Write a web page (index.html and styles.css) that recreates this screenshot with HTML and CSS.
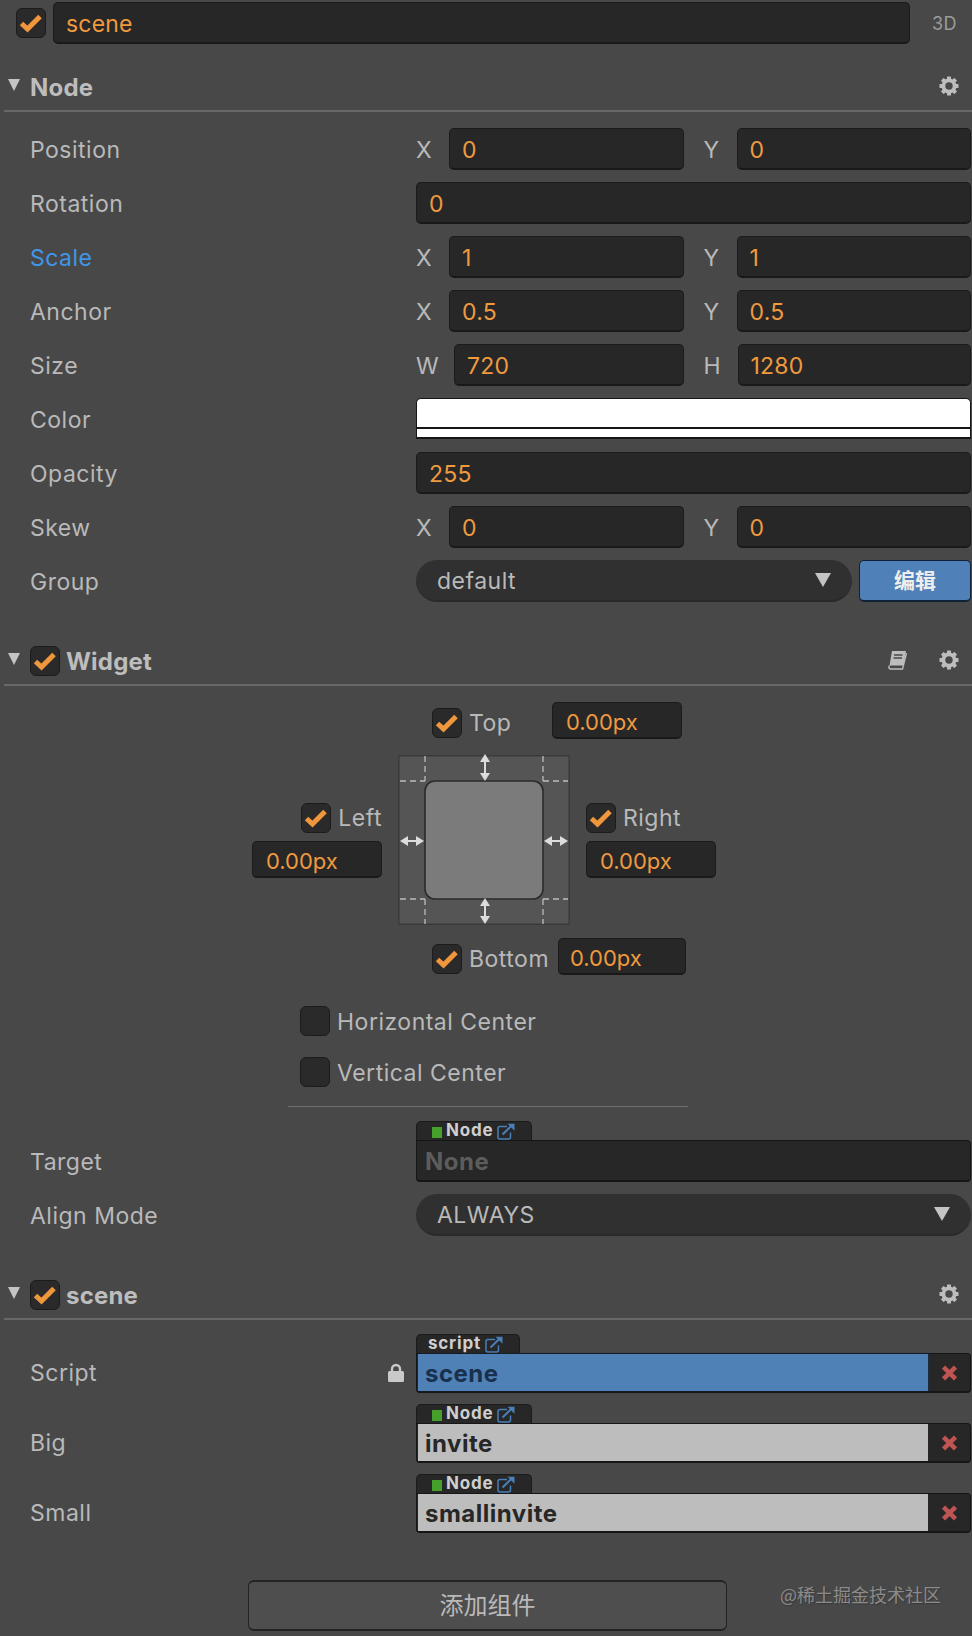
FILE: index.html
```html
<!DOCTYPE html>
<html lang="en">
<head>
  <meta charset="UTF-8">
  <meta name="viewport" content="width=device-width, initial-scale=1.0">
  <title>Inspector</title>
  <link rel="stylesheet" href="styles.css">
</head>
<body>
  <!-- shared icons -->
  <svg class="icon-defs">
    <symbol id="i-check" viewBox="0 0 30 30">
      <path d="M5.5 15.5 L11.5 21 L24 8.5" fill="none" stroke="#f0973d" stroke-width="5"/>
    </symbol>
    <symbol id="i-gear" viewBox="0 0 20 20">
      <circle cx="10" cy="10" r="5.6" fill="none" stroke="#bdbdbd" stroke-width="3.8"/>
      <g fill="#bdbdbd">
        <rect x="8" y="0.5" width="4" height="4" rx="0.6"/>
        <rect x="8" y="15.5" width="4" height="4" rx="0.6"/>
        <rect x="0.5" y="8" width="4" height="4" rx="0.6"/>
        <rect x="15.5" y="8" width="4" height="4" rx="0.6"/>
        <rect x="8" y="0.5" width="4" height="4" rx="0.6" transform="rotate(45 10 10)"/>
        <rect x="8" y="15.5" width="4" height="4" rx="0.6" transform="rotate(45 10 10)"/>
        <rect x="0.5" y="8" width="4" height="4" rx="0.6" transform="rotate(45 10 10)"/>
        <rect x="15.5" y="8" width="4" height="4" rx="0.6" transform="rotate(45 10 10)"/>
      </g>
    </symbol>
    <symbol id="i-link" viewBox="0 0 18 17">
      <path d="M10 3.5 H3 Q1 3.5 1 5.5 V14 Q1 16 3 16 H11.5 Q13.5 16 13.5 14 V9.5" fill="none" stroke="#4a7fb8" stroke-width="1.5"/>
      <path d="M5.5 11.5 L14.5 2.8" fill="none" stroke="#4a7fb8" stroke-width="2"/>
      <path d="M10.5 0.8 H17.5 V7.8 Z" fill="#4a7fb8"/>
    </symbol>
    <symbol id="i-close" viewBox="0 0 17 16">
      <path d="M2.5 2.2 L14.5 13.8 M14.5 2.2 L2.5 13.8" fill="none" stroke="#bf5553" stroke-width="4.6"/>
    </symbol>
  </svg>

  <div class="top-bar">
    <span class="check-box"><svg class="check-mark"><use href="#i-check"/></svg></span>
    <div class="input name-input">scene</div>
    <span class="mode-3d">3D</span>
  </div>

  <!-- Node -->
  <div class="section-head section-first">
    <span class="fold"></span>
    <span class="section-title">Node</span>
    <svg class="gear"><use href="#i-gear"/></svg>
  </div>
  <div class="prop">
    <label>Position</label>
    <div class="pair">
      <div class="axis"><span>X</span><div class="input">0</div></div>
      <div class="axis"><span>Y</span><div class="input">0</div></div>
    </div>
  </div>
  <div class="prop">
    <label>Rotation</label>
    <div class="input wide">0</div>
  </div>
  <div class="prop">
    <label class="changed">Scale</label>
    <div class="pair">
      <div class="axis"><span>X</span><div class="input">1</div></div>
      <div class="axis"><span>Y</span><div class="input">1</div></div>
    </div>
  </div>
  <div class="prop">
    <label>Anchor</label>
    <div class="pair">
      <div class="axis"><span>X</span><div class="input">0.5</div></div>
      <div class="axis"><span>Y</span><div class="input">0.5</div></div>
    </div>
  </div>
  <div class="prop">
    <label>Size</label>
    <div class="pair">
      <div class="axis axis-w"><span>W</span><div class="input">720</div></div>
      <div class="axis axis-h"><span>H</span><div class="input">1280</div></div>
    </div>
  </div>
  <div class="prop">
    <label>Color</label>
    <div class="swatch"><div class="swatch-alpha"></div></div>
  </div>
  <div class="prop">
    <label>Opacity</label>
    <div class="input wide">255</div>
  </div>
  <div class="prop">
    <label>Skew</label>
    <div class="pair">
      <div class="axis"><span>X</span><div class="input">0</div></div>
      <div class="axis"><span>Y</span><div class="input">0</div></div>
    </div>
  </div>
  <div class="prop">
    <label>Group</label>
    <div class="select">default<span class="select-arrow"></span></div>
    <button class="edit-btn">编辑</button>
  </div>

  <!-- Widget -->
  <div class="section-head">
    <span class="fold"></span>
    <span class="check-box"><svg class="check-mark"><use href="#i-check"/></svg></span>
    <span class="section-title">Widget</span>
    <svg class="book" viewBox="0 0 20 20">
      <path d="M5 1 H19 L16.5 15.5 H2.5 Z" fill="#bdbdbd"/>
      <path d="M2.4 15.6 Q1 19 4 19 H15.5 L19.5 3" fill="none" stroke="#bdbdbd" stroke-width="1.4"/>
      <path d="M7 5 H15.5 M6.5 8 H15" stroke="#484848" stroke-width="1.4"/>
    </svg>
    <svg class="gear"><use href="#i-gear"/></svg>
  </div>

  <div class="align-row align-top">
    <div class="check check-top">
      <span class="check-box"><svg class="check-mark"><use href="#i-check"/></svg></span>
      <span>Top</span>
    </div>
    <div class="input small">0.00px</div>
  </div>

  <div class="align-mid">
    <div class="side side-left">
      <div class="check">
        <span class="check-box"><svg class="check-mark"><use href="#i-check"/></svg></span>
        <span>Left</span>
      </div>
      <div class="input small">0.00px</div>
    </div>

    <svg class="align-box" viewBox="0 0 172 170">
      <rect x="0.75" y="0.75" width="170.5" height="168.5" fill="#555" stroke="#3b3b3b" stroke-width="1.5"/>
      <g stroke="#bcbcbc" stroke-width="1.3" stroke-dasharray="6 4">
        <path d="M27 1 V26 M2 26 H27"/>
        <path d="M145 1 V26 M145 26 H170"/>
        <path d="M27 144 V169 M2 144 H27"/>
        <path d="M145 144 V169 M145 144 H170"/>
      </g>
      <rect x="27" y="26" width="118" height="118" rx="10" fill="#7b7b7b" stroke="#2b2b2b" stroke-width="1.6"/>
      <g fill="#dcdcdc">
        <path d="M87 -1 L92 7 H82 Z M87 26 L92 18 H82 Z"/>
        <path d="M87 143 L92 151 H82 Z M87 169 L92 161 H82 Z"/>
        <path d="M2 86 L10 81 V91 Z M26 86 L18 81 V91 Z"/>
        <path d="M146 86 L154 81 V91 Z M170 86 L162 81 V91 Z"/>
      </g>
      <g stroke="#dcdcdc" stroke-width="2">
        <path d="M87 6 V19 M87 150 V162 M9 86 H19 M153 86 H163"/>
      </g>
    </svg>

    <div class="side">
      <div class="check">
        <span class="check-box"><svg class="check-mark"><use href="#i-check"/></svg></span>
        <span>Right</span>
      </div>
      <div class="input small">0.00px</div>
    </div>
  </div>

  <div class="align-row align-bottom">
    <div class="check check-bottom">
      <span class="check-box"><svg class="check-mark"><use href="#i-check"/></svg></span>
      <span>Bottom</span>
    </div>
    <div class="input small small-tight">0.00px</div>
  </div>

  <div class="center-checks">
    <div class="check"><span class="check-box"></span><span>Horizontal Center</span></div>
    <div class="check"><span class="check-box"></span><span>Vertical Center</span></div>
  </div>
  <div class="divider"></div>

  <div class="prop prop-ref prop-target">
    <label>Target</label>
    <div class="ref">
      <div class="ref-tab tab-node"><i class="node-dot"></i>Node<svg class="link"><use href="#i-link"/></svg></div>
      <div class="ref-field ref-none">None</div>
    </div>
  </div>
  <div class="prop">
    <label>Align Mode</label>
    <div class="select">ALWAYS<span class="select-arrow"></span></div>
  </div>

  <!-- scene component -->
  <div class="section-head">
    <span class="fold"></span>
    <span class="check-box"><svg class="check-mark"><use href="#i-check"/></svg></span>
    <span class="section-title">scene</span>
    <svg class="gear"><use href="#i-gear"/></svg>
  </div>

  <div class="prop prop-ref prop-script">
    <label>Script
      <svg class="lock" viewBox="0 0 16 19">
        <path d="M4 9 V6 A4 4 0 0 1 12 6 V9" fill="none" stroke="#c9c9c9" stroke-width="2.4"/>
        <rect x="0" y="8" width="16" height="11" rx="1.5" fill="#c9c9c9"/>
      </svg>
    </label>
    <div class="ref">
      <div class="ref-tab tab-script">script<svg class="link"><use href="#i-link"/></svg></div>
      <div class="ref-field">
        <div class="ref-value ref-blue">scene</div>
        <div class="ref-clear"><svg class="close"><use href="#i-close"/></svg></div>
      </div>
    </div>
  </div>
  <div class="prop prop-ref">
    <label>Big</label>
    <div class="ref">
      <div class="ref-tab tab-node"><i class="node-dot"></i>Node<svg class="link"><use href="#i-link"/></svg></div>
      <div class="ref-field">
        <div class="ref-value">invite</div>
        <div class="ref-clear"><svg class="close"><use href="#i-close"/></svg></div>
      </div>
    </div>
  </div>
  <div class="prop prop-ref">
    <label>Small</label>
    <div class="ref">
      <div class="ref-tab tab-node"><i class="node-dot"></i>Node<svg class="link"><use href="#i-link"/></svg></div>
      <div class="ref-field">
        <div class="ref-value">smallinvite</div>
        <div class="ref-clear"><svg class="close"><use href="#i-close"/></svg></div>
      </div>
    </div>
  </div>

  <div class="footer">
    <button class="add-btn">添加组件</button>
    <span class="watermark">@稀土掘金技术社区</span>
  </div>
</body>
</html>
```

FILE: styles.css
```css
body {
  margin: 0;
  width: 972px;
  height: 1636px;
  overflow: hidden;
  background-color: #484848;
  color: #b9b9b9;
  font-family: "Inter", "Noto Sans CJK SC", sans-serif;
  font-size: 23px;
  letter-spacing: 0.5px;
}

.icon-defs {
  display: none;
}

/* Shared controls */
.input {
  box-sizing: border-box;
  flex: 1;
  height: 42px;
  line-height: 42px;
  padding-left: 12px;
  background: #272727;
  border: 1px solid #1b1b1b;
  border-bottom: 2px solid #191919;
  border-radius: 5px;
  color: #ef9a3f;
  letter-spacing: 0.2px;
}

.check-box {
  flex: none;
  box-sizing: border-box;
  display: block;
  width: 30px;
  height: 30px;
  background: #2a2a2a;
  border: 1px solid #1c1c1c;
  border-radius: 6px;
}

.check-mark {
  display: block;
  width: 30px;
  height: 30px;
  margin: -1px;
}

.check {
  display: flex;
  align-items: center;
  gap: 7px;
}

.select {
  flex: 1;
  box-sizing: border-box;
  display: flex;
  justify-content: space-between;
  align-items: center;
  height: 42px;
  padding: 1px 21px 0;
  background: #303030;
  border-bottom: 2px solid #2a2a2a;
  border-radius: 21px;
}

.select-arrow {
  width: 0;
  height: 0;
  margin-top: -2px;
  border-left: 8px solid transparent;
  border-right: 8px solid transparent;
  border-top: 14px solid #c4c4c4;
}

/* Top bar */
.top-bar {
  display: flex;
  align-items: center;
  margin-top: 2px;
  padding-left: 16px;
  height: 42px;
}

.name-input {
  flex: none;
  width: 857px;
  margin-left: 7px;
}

.mode-3d {
  margin-left: 22px;
  font-size: 18px;
  color: #9c9c9c;
}

/* Section headers */
.section-head {
  display: flex;
  align-items: center;
  height: 30px;
  margin: 44px 0 16px 4px;
  padding-bottom: 8px;
  border-bottom: 2px solid #686868;
}

.section-first {
  margin-top: 28px;
}

.fold {
  flex: none;
  width: 0;
  height: 0;
  margin: -5px 0 0 4px;
  border-left: 6px solid transparent;
  border-right: 6px solid transparent;
  border-top: 12px solid #c4c4c4;
}

.section-head .check-box {
  margin-left: 10px;
}

.section-title {
  margin-left: 10px;
  font-size: 24px;
  font-weight: 700;
  letter-spacing: 0.2px;
  color: #bdbdbd;
}

.section-head .check-box + .section-title {
  margin-left: 6px;
}

.gear {
  width: 20px;
  height: 20px;
  margin: -2px 13px 0 0;
}

.section-head .section-title + .gear {
  margin-left: auto;
}

.book {
  width: 20px;
  height: 20px;
  margin: -2px 32px 0 auto;
}

/* Property rows */
.prop {
  display: flex;
  height: 42px;
  margin-top: 12px;
  padding: 0 1px 0 30px;
}

.section-head + .prop {
  margin-top: 0;
}

.prop label {
  flex: none;
  box-sizing: border-box;
  width: 386px;
  line-height: 44px;
}

.prop label.changed {
  color: #3f96e8;
}

.pair {
  flex: 1;
  display: flex;
  gap: 20px;
}

.axis {
  flex: 1;
  display: flex;
}

.axis span {
  flex: none;
  width: 33px;
  line-height: 44px;
}

.axis-w span {
  width: 38px;
}

.axis-h span {
  width: 34px;
}

.swatch {
  flex: 1;
  box-sizing: border-box;
  height: 41px;
  background: #fff;
  border: 1px solid #161616;
  border-bottom-width: 2px;
  border-radius: 5px 5px 0 0;
  display: flex;
  align-items: flex-end;
}

.swatch-alpha {
  flex: 1;
  height: 8px;
  border-top: 2px solid #161616;
}

.edit-btn {
  flex: none;
  width: 112px;
  height: 42px;
  margin-left: 7px;
  padding: 0 0 4px;
  background: #4f81b8;
  border: 1px solid #0f2338;
  border-bottom-width: 2px;
  border-radius: 5px;
  color: #eee;
  font-family: "Noto Sans CJK SC", sans-serif;
  font-size: 21px;
  font-weight: 700;
}

/* Widget align editor */
.align-row {
  display: flex;
  align-items: flex-end;
  padding-left: 432px;
}

.align-row .check {
  margin-bottom: 1px;
}

.check-top {
  width: 120px;
}

.check-bottom {
  width: 126px;
}

.input.small {
  flex: none;
  width: 130px;
  height: 37px;
  line-height: 38px;
  font-size: 22px;
  letter-spacing: 0;
  padding-left: 13px;
}

.input.small-tight {
  width: 128px;
  padding-left: 11px;
}

.align-mid {
  display: flex;
  align-items: center;
  gap: 16px;
  margin: 16px 0 13px;
  padding-left: 252px;
}

.align-box {
  flex: none;
  width: 172px;
  height: 170px;
  overflow: visible;
}

.side {
  width: 130px;
  display: flex;
  flex-direction: column;
  gap: 8px;
}

.side-left {
  align-items: flex-end;
}

.center-checks {
  display: flex;
  flex-direction: column;
  gap: 21px;
  margin-top: 31px;
  padding-left: 300px;
}

.center-checks span:last-child {
  padding-top: 1px;
}

.divider {
  height: 1px;
  margin: 19px 284px 0 288px;
  background: #707070;
}

/* Reference fields */
.prop-ref {
  height: auto;
  margin-top: 11px;
  align-items: flex-end;
}

.prop-target {
  margin-top: 14px;
}

.section-head + .prop-script {
  margin-top: -2px;
}

.prop-ref label {
  display: flex;
  justify-content: space-between;
  align-items: center;
  height: 42px;
  padding: 2px 12px 0 0;
}

.lock {
  width: 16px;
  height: 19px;
  margin-top: -2px;
}

.ref {
  flex: 1;
  display: flex;
  flex-direction: column;
  align-items: flex-start;
}

.ref-tab {
  box-sizing: border-box;
  display: flex;
  align-items: flex-start;
  height: 19px;
  background: #272727;
  border: 1px solid #1b1b1b;
  border-bottom: 0;
  border-radius: 5px 5px 0 0;
  color: #cfcfcf;
  font-size: 17px;
  font-weight: 700;
  letter-spacing: 0.8px;
  line-height: 17px;
}

.tab-node {
  width: 116px;
  padding-left: 15px;
}

.tab-script {
  width: 104px;
  padding-left: 11px;
}

.node-dot {
  flex: none;
  width: 10px;
  height: 11px;
  margin: 5px 4px 0 0;
  background: #46a12c;
}

.link {
  flex: none;
  width: 18px;
  height: 17px;
  margin: 1px 0 0 4px;
}

.ref-field {
  box-sizing: border-box;
  align-self: stretch;
  display: flex;
  height: 40px;
  background: #272727;
  border: 1px solid #161616;
  border-bottom-width: 2px;
  border-radius: 0 4px 4px 4px;
  font-size: 24px;
  font-weight: 700;
  letter-spacing: 0.5px;
}

.ref-none {
  height: 42px;
  line-height: 41px;
  padding-left: 8px;
  color: #5c5c5c;
}

.ref-value {
  flex: 1;
  padding-left: 7px;
  margin-left: 1px;
  line-height: 39px;
  background: #bdbdbd;
  color: #272727;
}

.ref-blue {
  background: #4f80b6;
  color: #18304d;
  box-shadow: 2px 0 2px #1d2c3d;
}

.ref-clear {
  flex: none;
  width: 42px;
  display: flex;
  align-items: center;
  justify-content: center;
}

.close {
  width: 17px;
  height: 16px;
}

/* Footer */
.footer {
  display: flex;
  align-items: flex-start;
  gap: 53px;
  margin-top: 47px;
  padding-left: 248px;
}

.add-btn {
  flex: none;
  width: 479px;
  height: 51px;
  padding: 0 0 4px;
  background: #4e4e4e;
  border: 1px solid #232323;
  border-top-width: 2px;
  border-bottom-width: 2px;
  border-radius: 6px;
  color: #b9b9b9;
  font-family: "Noto Sans CJK SC", sans-serif;
  font-size: 24px;
}

.watermark {
  margin-top: 1px;
  font-family: "Noto Sans CJK SC", sans-serif;
  font-size: 18px;
  letter-spacing: 0;
  color: #8b8b8b;
  text-shadow: 1px 1px 1px #383838;
}
```
